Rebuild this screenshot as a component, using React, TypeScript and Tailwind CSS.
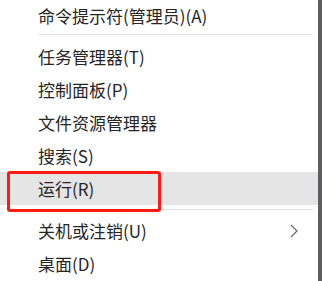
import React from 'react';

type Item = { label: string; highlighted?: boolean; submenu?: boolean };

const topItems: Item[] = [
  { label: '任务管理器(T)' },
  { label: '控制面板(P)' },
  { label: '文件资源管理器' },
  { label: '搜索(S)' },
  { label: '运行(R)', highlighted: true },
];

const bottomItems: Item[] = [
  { label: '关机或注销(U)', submenu: true },
  { label: '桌面(D)' },
];

function MenuRow({ item }: { item: Item }) {
  return (
    <div
      className={`flex h-[33px] items-center justify-between pl-[38px] pr-[18px] ${
        item.highlighted ? 'bg-[#e5e5e5]' : ''
      }`}
    >
      <span>{item.label}</span>
      {item.submenu && (
        <svg width="10" height="14" viewBox="0 0 10 14" className="mr-[1px]">
          <polyline
            points="2,1 8,7 2,13"
            fill="none"
            stroke="#6e6a7a"
            strokeWidth="1.3"
          />
        </svg>
      )}
    </div>
  );
}

function Separator() {
  return <div className="my-[4px] ml-[38px] mr-[5px] h-px bg-[#e3e3e3]" />;
}

export default function App() {
  return (
    <div
      className="relative flex h-[281px] w-[322px] overflow-hidden bg-white text-[17px] leading-none text-[#262626]"
      style={{ fontFamily: '"Noto Sans CJK SC", "Microsoft YaHei", sans-serif' }}
    >
      <div className="w-[318px]">
        <div className="flex h-[30px] items-center pl-[38px]">
          <span>命令提示符(管理员)(A)</span>
        </div>
        <div className="mb-[5px] mt-[4px] ml-[38px] mr-[5px] h-px bg-[#e3e3e3]" />
        {topItems.map((item) => (
          <MenuRow key={item.label} item={item} />
        ))}
        <Separator />
        {bottomItems.map((item) => (
          <MenuRow key={item.label} item={item} />
        ))}
      </div>
      <div className="w-[4px] bg-[#5b5d63]" />

      {/* red annotation box */}
      <div className="absolute left-[7px] top-[171px] h-[41px] w-[154px] rounded-[3px] border-[3px] border-[#ff1b12]" />
    </div>
  );
}
